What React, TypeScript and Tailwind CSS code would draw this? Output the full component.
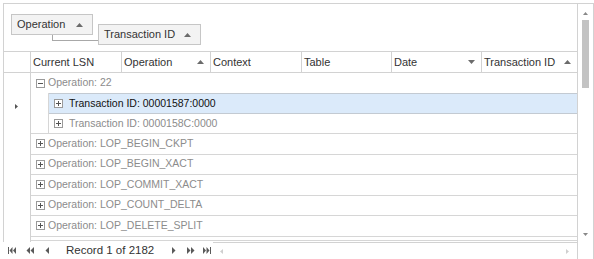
import React from "react";

const font = { fontFamily: '"Liberation Sans", Arial, sans-serif' };

function SortArrow({ down = false }: { down?: boolean }) {
  return (
    <svg width="7" height="4" viewBox="0 0 7 4" className="shrink-0">
      {down ? <polygon points="0,0 7,0 3.5,4" fill="#6b6b6b" /> : <polygon points="0,4 7,4 3.5,0" fill="#6b6b6b" />}
    </svg>
  );
}

function ExpandBox({ open = false }: { open?: boolean }) {
  return (
    <svg width="9" height="9" viewBox="0 0 9 9" className="shrink-0">
      <rect x="0.5" y="0.5" width="8" height="8" fill="white" stroke="#9a9a9a" />
      <rect x="2" y="4" width="5" height="1" fill="#555" />
      {!open && <rect x="4" y="2" width="1" height="5" fill="#555" />}
    </svg>
  );
}

type Col = { title: string; w: string; sort?: "up" | "down" };

const columns: Col[] = [
  { title: "Current LSN", w: "w-[91px]" },
  { title: "Operation", w: "w-[89px]", sort: "up" },
  { title: "Context", w: "w-[91px]" },
  { title: "Table", w: "w-[90px]" },
  { title: "Date", w: "w-[90px]", sort: "down" },
  { title: "Transaction ID", w: "flex-1", sort: "up" },
];

const groups = ["LOP_BEGIN_CKPT", "LOP_BEGIN_XACT", "LOP_COMMIT_XACT", "LOP_COUNT_DELTA", "LOP_DELETE_SPLIT"];

function NavIcon({ kind }: { kind: "first" | "prevPage" | "prev" | "next" | "nextPage" | "last" }) {
  const c = "#5a5a5a";
  if (kind === "prev")
    return (
      <svg width="4" height="7" viewBox="0 0 4 7">
        <polygon points="4,0 4,7 0.5,3.5" fill={c} />
      </svg>
    );
  if (kind === "next")
    return (
      <svg width="4" height="7" viewBox="0 0 4 7">
        <polygon points="0,0 0,7 3.5,3.5" fill={c} />
      </svg>
    );
  if (kind === "prevPage")
    return (
      <svg width="8" height="7" viewBox="0 0 8 7">
        <polygon points="4,0 4,7 0.5,3.5" fill={c} />
        <polygon points="8,0 8,7 4.5,3.5" fill={c} />
      </svg>
    );
  if (kind === "nextPage")
    return (
      <svg width="8" height="7" viewBox="0 0 8 7">
        <polygon points="0,0 0,7 3.5,3.5" fill={c} />
        <polygon points="4,0 4,7 7.5,3.5" fill={c} />
      </svg>
    );
  if (kind === "first")
    return (
      <svg width="8" height="7" viewBox="0 0 8 7">
        <rect x="0" y="0" width="1" height="7" fill={c} />
        <polygon points="4.5,0 4.5,7 1.5,3.5" fill={c} />
        <polygon points="8,0 8,7 5,3.5" fill={c} />
      </svg>
    );
  return (
    <svg width="8" height="7" viewBox="0 0 8 7">
      <polygon points="0,0 0,7 3,3.5" fill={c} />
      <polygon points="3.5,0 3.5,7 6.5,3.5" fill={c} />
      <rect x="7" y="0" width="1" height="7" fill={c} />
    </svg>
  );
}

export default function App() {
  return (
    <div className="w-[594px] h-[259px] overflow-hidden bg-white pt-[3px] pl-[3px] text-[11px]" style={font}>
      <div className="flex w-[591px] h-[256px] border-t border-r border-[#d2d2d2]">
        <div className="flex w-[575px] flex-col">
          <div className="flex h-[238px] shrink-0 flex-col overflow-hidden border-l border-r border-[#d2d2d2]">
            {/* group panel */}
            <div className="flex h-[48px] shrink-0 items-start border-b border-[#d2d2d2]">
              <div className="relative ml-[7px] mt-[10px] flex h-[21px] w-[82px] items-center justify-between border border-[#c6c6c6] bg-[#f3f3f3] pl-[5px] pr-[9px] text-[#333]">
                <span>Operation</span>
                <SortArrow />
                <div className="absolute left-[40px] top-[20px] h-[6px] w-[46px] border-b border-l border-[#a8a8a8]" />
              </div>
              <div className="ml-[5px] mt-[20px] flex h-[21px] w-[103px] items-center justify-between border border-[#c6c6c6] bg-[#f3f3f3] pl-[5px] pr-[9px] text-[#333]">
                <span>Transaction ID</span>
                <SortArrow />
              </div>
            </div>

            {/* header */}
            <div className="flex h-[21px] shrink-0 border-b border-[#d2d2d2] text-[#333]">
              <div className="w-[27px] shrink-0 border-r border-[#d2d2d2]" />
              {columns.map((c, i) => (
                <div
                  key={c.title}
                  className={`${c.w} flex shrink-0 items-center justify-between pl-[2px] pr-[6px] ${i < columns.length - 1 ? "border-r border-[#d2d2d2]" : ""}`}
                >
                  <span>{c.title}</span>
                  {c.sort && <SortArrow down={c.sort === "down"} />}
                </div>
              ))}
            </div>

            {/* rows */}
            <div className="flex min-h-0 flex-1 overflow-hidden text-[10.5px]">
              <div className="w-[27px] shrink-0 border-r border-[#d2d2d2]">
                <div className="mt-[27px] flex h-[13px] items-center justify-center pr-[1px]">
                  <svg width="3" height="5" viewBox="0 0 3 5">
                    <polygon points="0,0 0,5 3,2.5" fill="#555" />
                  </svg>
                </div>
              </div>
              <div className="flex flex-1 flex-col">
                <div className="shrink-0 border-b border-[#d6d6d6]">
                  <div className="flex h-[20px] items-center gap-[3px] pl-[5px] text-[#8c8c8c]">
                    <ExpandBox open />
                    <span>Operation: 22</span>
                  </div>
                  <div className="ml-[17px] border-l border-[#d6d6d6]">
                    <div className="flex h-[21px] items-center gap-[6px] border-y border-[#c3cad2] bg-[#dbeafa] pl-[5px] text-[#111]">
                      <ExpandBox />
                      <span>Transaction ID: 00001587:0000</span>
                    </div>
                    <div className="flex h-[19px] items-center gap-[6px] pl-[5px] text-[#8c8c8c]">
                      <ExpandBox />
                      <span>Transaction ID: 0000158C:0000</span>
                    </div>
                  </div>
                </div>
                {groups.map((g) => (
                  <div key={g} className="flex h-[20.5px] shrink-0 items-center gap-[3px] border-b border-[#d6d6d6] pl-[5px] text-[#8c8c8c]">
                    <ExpandBox />
                    <span>Operation: {g}</span>
                  </div>
                ))}
                <div className="h-[4px] shrink-0 border-b border-[#d6d6d6]" />
              </div>
            </div>
          </div>

          {/* navigator + horizontal scroll */}
          <div className="flex h-[17px] shrink-0">
            <div className="flex w-[210px] shrink-0 items-center whitespace-nowrap pl-[5px] text-[#333]">
              <NavIcon kind="first" />
              <span className="ml-[10px] flex"><NavIcon kind="prevPage" /></span>
              <span className="ml-[11px] flex"><NavIcon kind="prev" /></span>
              <span className="ml-[17px] text-[11.5px]">Record 1 of 2182</span>
              <span className="ml-[18px] flex"><NavIcon kind="next" /></span>
              <span className="ml-[11px] flex"><NavIcon kind="nextPage" /></span>
              <span className="ml-[8px] flex"><NavIcon kind="last" /></span>
            </div>
            <div className="flex flex-1 items-center justify-between border-t border-r border-[#d2d2d2] pl-[7px] pr-[8px]">
              <svg width="3" height="5" viewBox="0 0 3 5">
                <polygon points="3,0 3,5 0,2.5" fill="#cfcfcf" />
              </svg>
              <svg width="3" height="5" viewBox="0 0 3 5">
                <polygon points="0,0 0,5 3,2.5" fill="#cfcfcf" />
              </svg>
            </div>
          </div>
        </div>

        {/* vertical scrollbar */}
        <div className="flex w-[15px] shrink-0 flex-col items-start pl-[4px]">
          <div className="ml-[1px] mt-[7px] flex h-[4px] items-center">
            <svg width="5" height="3" viewBox="0 0 5 3">
              <polygon points="0,3 5,3 2.5,0" fill="#888" />
            </svg>
          </div>
          <div className="mt-[5px] h-[68px] w-[7px] bg-[#c3c3c3]" />
          <div className="flex-1" />
          <div className="mb-[23px] ml-[1px] flex h-[4px] items-center">
            <svg width="5" height="3" viewBox="0 0 5 3">
              <polygon points="0,0 5,0 2.5,3" fill="#888" />
            </svg>
          </div>
        </div>
      </div>
    </div>
  );
}
